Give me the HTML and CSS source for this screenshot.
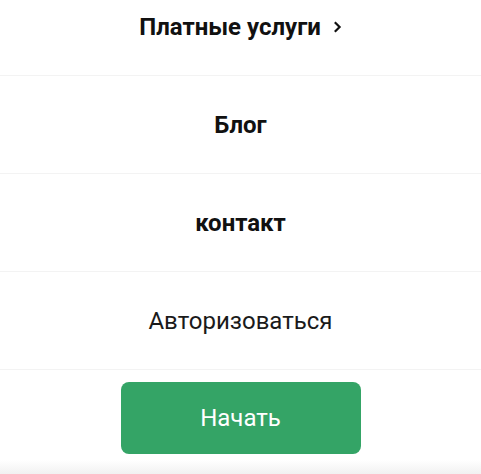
FILE: index.html
```html
<!DOCTYPE html>
<html lang="ru">
<head>
<meta charset="utf-8">
<link rel="stylesheet" href="styles.css">
</head>
<body>
<nav class="menu">
  <a class="item bold" href="#">Платные услуги <span class="chev"><svg width="9" height="12" viewBox="0 0 9 12"><path d="M1.8 1.2 L6.6 6 L1.8 10.8" fill="none" stroke="#111" stroke-width="2.2"/></svg></span></a>
  <a class="item bold" href="#">Блог</a>
  <a class="item bold" href="#">контакт</a>
  <a class="item" href="#">Авторизоваться</a>
  <div class="cta"><a class="btn" href="#">Начать</a></div>
  <div class="shade"></div>
</nav>
</body>
</html>
```
FILE: styles.css
```css
html, body { margin: 0; padding: 0; background: #fff; }
body { font-family: Roboto, "Noto Sans", sans-serif; color: #111; width: 481px; height: 474px; overflow: hidden; }
.menu { display: flex; flex-direction: column; margin-top: -22px; }
.item {
  display: flex; align-items: center; justify-content: center;
  height: 97px; border-bottom: 1px solid #f3f3f3;
  font-size: 24px; color: #1a1a1a; text-decoration: none;
}
.bold { font-weight: 700; color: #111; }
.chev { display: inline-flex; margin-left: 12px; margin-top: 1px; }
.cta { display: flex; justify-content: center; padding-top: 12px; }
.btn {
  width: 240px; height: 72px; border-radius: 8px; background: #34a466;
  color: #fff; font-size: 24px; text-decoration: none;
  display: flex; align-items: center; justify-content: center;
}
.shade { height: 14px; margin-top: 6px; background: linear-gradient(#fff, #f1f1f1); }
```
